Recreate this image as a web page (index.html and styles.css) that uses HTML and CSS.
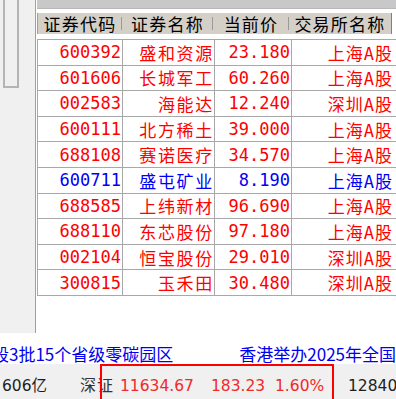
FILE: index.html
```html
<!DOCTYPE html>
<html lang="zh">
<head>
<meta charset="utf-8">
<link rel="stylesheet" href="styles.css">
</head>
<body>
<div class="main">
  <div class="side"><div class="frame"></div></div>
  <div class="grid">
    <div class="band"></div>
    <div class="head">
      <span>证券代码</span><span>证券名称</span><span>当前价</span><span>交易所名称</span>
    </div>
    <div class="table">
      <div class="r"><div class="c">600392</div><div class="c nm">盛和资源</div><div class="c">23.180</div><div class="c ex">上海A股</div></div>
      <div class="r"><div class="c">601606</div><div class="c nm">长城军工</div><div class="c">60.260</div><div class="c ex">上海A股</div></div>
      <div class="r"><div class="c">002583</div><div class="c nm">海能达</div><div class="c">12.240</div><div class="c ex">深圳A股</div></div>
      <div class="r"><div class="c">600111</div><div class="c nm">北方稀土</div><div class="c">39.000</div><div class="c ex">上海A股</div></div>
      <div class="r"><div class="c">688108</div><div class="c nm">赛诺医疗</div><div class="c">34.570</div><div class="c ex">上海A股</div></div>
      <div class="r blue"><div class="c">600711</div><div class="c nm">盛屯矿业</div><div class="c">8.190</div><div class="c ex">上海A股</div></div>
      <div class="r"><div class="c">688585</div><div class="c nm">上纬新材</div><div class="c">96.690</div><div class="c ex">上海A股</div></div>
      <div class="r"><div class="c">688110</div><div class="c nm">东芯股份</div><div class="c">97.180</div><div class="c ex">上海A股</div></div>
      <div class="r"><div class="c">002104</div><div class="c nm">恒宝股份</div><div class="c">29.010</div><div class="c ex">深圳A股</div></div>
      <div class="r"><div class="c">300815</div><div class="c nm">玉禾田</div><div class="c">30.480</div><div class="c ex">深圳A股</div></div>
    </div>
  </div>
</div>
<div class="ticker"><span class="t1">段3批15个省级零碳园区</span><span class="t2">香港举办2025年全国</span></div>
<div class="status">
  <span class="s1">606亿</span>
  <span class="s2">深证</span>
  <span class="s3 up">11634.67</span>
  <span class="s4 up">183.23</span>
  <span class="s5 up">1.60%</span>
  <span class="s6">12840</span>
  <div class="mark"></div>
</div>
</body>
</html>
```
FILE: styles.css
```css
* { box-sizing: border-box; }
html, body { margin: 0; padding: 0; }
body {
  width: 396px;
  height: 399px;
  overflow: hidden;
  background: #fff;
  font-family: "Noto Sans CJK SC", sans-serif;
}
.main { display: flex; height: 333px; }
.side {
  width: 36px;
  flex: none;
  background: #f0f0f0;
  border-right: 1px solid #a0a0a0;
  padding-left: 3px;
}
.frame {
  width: 16px;
  height: 88px;
  border: 2px solid #b4b4b4;
  border-top: 0;
}
.grid {
  flex: 1;
  min-width: 0;
  overflow: hidden;
  padding-left: 1px;
}
.band {
  height: 9px;
  background: #c8c8c8;
  border-bottom: 1px solid #b8b8b8;
}
.head {
  margin-top: 4px;
  width: 355px;
  height: 21px;
  display: grid;
  grid-template-columns: 84px 91px 76px 102px;
  background: #d4d0c8;
  border-left: 1px solid #a0a0a0;
  border-right: 1px solid #808080;
}
.head span {
  text-align: center;
  line-height: 21px;
  font-size: 17px;
  letter-spacing: 1.25px;
  color: #000;
  white-space: nowrap;
  background: linear-gradient(#9a9a9a, #9a9a9a) no-repeat right center / 1px 13px;
}
.head span:last-child { background: none; }
.table {
  margin-top: 5px;
  display: grid;
  grid-template-columns: 85px 92px 77px 106px;
  grid-auto-rows: 25.6px;
  width: max-content;
  border-top: 1px solid #a8a8a8;
  border-left: 1px solid #a8a8a8;
}
.r { display: contents; }
.c {
  display: flex;
  align-items: center;
  justify-content: flex-end;
  padding-right: 1px;
  border-right: 1px solid #a8a8a8;
  border-bottom: 1px solid #a8a8a8;
  font-family: "DejaVu Sans Mono", "Noto Sans CJK SC", monospace;
  font-size: 17px;
  color: #f00;
  white-space: nowrap;
}
.c.nm { letter-spacing: 1.7px; padding-right: 0; }
.c.ex { letter-spacing: 1px; padding-right: 4px; }
.blue .c { color: #0000f5; }
.ticker {
  height: 31px;
  padding-top: 12px;
  line-height: 18px;
  font-size: 17px;
  color: #0000ee;
  white-space: nowrap;
  overflow: hidden;
  display: flex;
  background: #fff;
}
.t1 { margin-left: -8px; flex: none; }
.t2 { margin-left: 66px; flex: none; }
.status {
  position: relative;
  height: 35px;
  padding-top: 13px;
  background: #f0f0f0;
  display: flex;
  line-height: 18px;
  font-size: 15.5px;
  font-family: "DejaVu Sans", "Noto Sans CJK SC", sans-serif;
  color: #1e1e1e;
  white-space: nowrap;
  overflow: hidden;
}
.status span { flex: none; }
.s1 { width: 80px; padding-left: 2px; }
.s2 { width: 40px; color: #333; letter-spacing: 1px; font-size: 16px; }
.s3 { width: 91px; }
.s4 { width: 64px; }
.s5 { width: 73px; }
.up { color: #f02a2a; }
.mark {
  position: absolute;
  left: 100px;
  top: 0;
  width: 234px;
  height: 40px;
  border: 2px solid #ff0000;
}
```
